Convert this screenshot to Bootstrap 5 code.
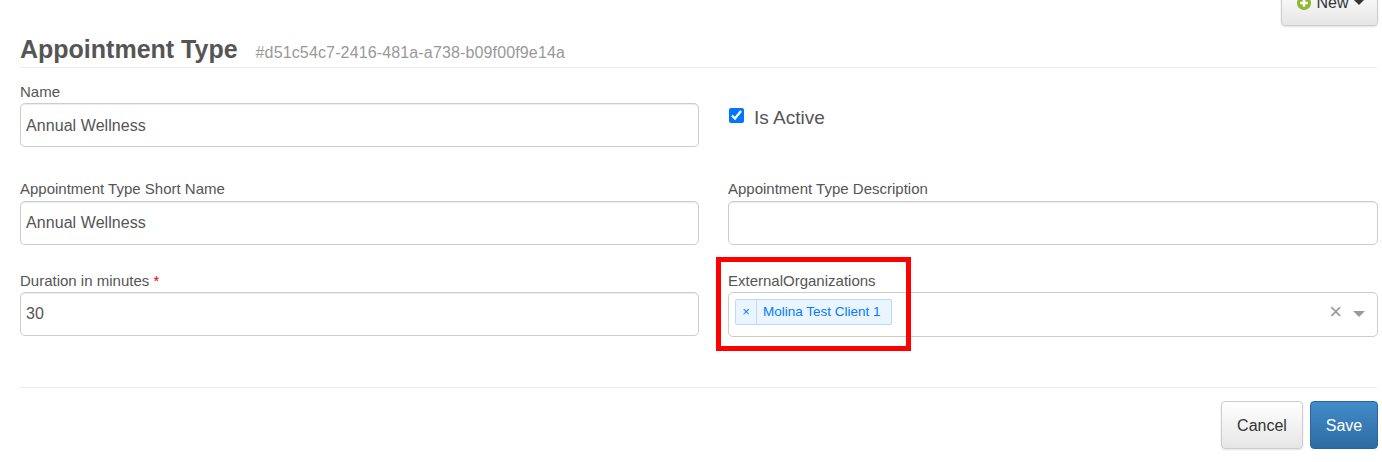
<!DOCTYPE html>
<html lang="en">
<head>
<meta charset="utf-8">
<title>Appointment Type</title>
<link href="https://cdn.jsdelivr.net/npm/bootstrap@5.3.0/dist/css/bootstrap.min.css" rel="stylesheet">
<style>
html, body { height: 462px; overflow: hidden; background: #fff; }
body { font-family: "Liberation Sans", Arial, sans-serif; color: #555; font-size: 14px; }
.page-wrap { padding: 0 4px 0 20px; height: 462px; display: flex; flex-direction: column; }
.top-bar { height: 26px; display: flex; justify-content: flex-end; }
.btn-new { width: 97px; height: 41px; margin-top: -15px; font-size: 16px; color: #333; padding: 0 0 6px 2px; background: linear-gradient(#fff, #e6e6e6); border: 1px solid #ccc; border-radius: 4px; box-shadow: 0 1px 2px rgba(0,0,0,.12); display: flex; align-items: center; justify-content: center; gap: 5px; }
.plus-ico { width: 14px; height: 14px; flex: none; }
.caret-ico { width: 0; height: 0; border-left: 5px solid transparent; border-right: 5px solid transparent; border-top: 5px solid #333; }
.title-row { height: 42px; border-bottom: 1px solid #eee; display: flex; align-items: baseline; padding-top: 9px; gap: 18px; }
.title-main { font-size: 25px; font-weight: 700; color: #555; margin: 0; line-height: 28px; }
.title-id { font-size: 16px; letter-spacing: .14px; color: #999; }
.form-cols { display: grid; grid-template-columns: 679px 650px; column-gap: 29px; margin-top: 15px; }
.fld-label { display: block; font-size: 15px; line-height: 17px; color: #555; margin: 0 0 3px; }
.lbl-gap { margin-bottom: 4px; }
.fld-input { height: 44px; font-size: 16px; letter-spacing: .07px; color: #555; padding: 8px 5px 6px; border: 1px solid #ccc; border-radius: 5px; box-shadow: inset 0 1px 1px rgba(0,0,0,.075); }
.fld-input.fld-low { padding: 6px 5px; }
.cell-a { height: 97px; }
.cell-b { height: 92px; }
.check-cell { padding-top: 22px; display: flex; align-items: flex-start; gap: 10px; font-size: 19px; line-height: 26px; padding-left: 1px; }
.check-cell .form-check-input { appearance: auto; -webkit-appearance: auto; width: 15px; height: 15px; margin: 3px 0 0; accent-color: #0075ff; background-image: none; }
.req-mark { color: #e00; }
.tag-box { height: 45px; border: 1px solid #ccc; border-radius: 5px; display: flex; align-items: center; padding: 0 12px 0 6px; }
.tag-chip { display: flex; align-items: stretch; height: 26px; margin-top: -5px; background: #ebf5ff; border: 1px solid #b8dbff; border-radius: 2px; color: #007eff; font-size: 14px; line-height: 23px; }
.tag-x { width: 21px; text-align: center; border-right: 1px solid #b8dbff; font-size: 13px; }
.tag-text { padding: 0 10px 0 6px; font-size: 13.5px; }
.box-clear { margin-left: auto; color: #999; font-size: 22px; line-height: 1; margin-top: -5px; }
.box-arrow { margin-left: 11px; margin-top: -1px; width: 0; height: 0; border-left: 6px solid transparent; border-right: 6px solid transparent; border-top: 6px solid #999; }
.foot-rule { border-top: 1px solid #eee; margin-top: 23px; padding-top: 13px; display: flex; justify-content: flex-end; gap: 7px; }
.btn-cancel, .btn-save { height: 48px; font-size: 16px; padding: 2px 0 0; border-radius: 4px; }
.btn-cancel { width: 82px; color: #333; background: linear-gradient(#fff, #e6e6e6); border: 1px solid #ccc; box-shadow: 0 1px 2px rgba(0,0,0,.12); }
.btn-save { width: 68px; color: #fff; background: linear-gradient(#428bca, #2d6ca2); border: 1px solid #2b669a; }
.alert-frame { position: absolute; left: 716px; top: 257px; width: 195px; height: 94px; border: 5px solid #f00; pointer-events: none; }
</style>
</head>
<body>
<div class="page-wrap position-relative">
  <div class="top-bar">
    <button type="button" class="btn btn-new">
      <svg class="plus-ico" viewBox="0 0 14 14"><circle cx="7" cy="7" r="7" fill="#8cb92e"/><path d="M7 3.2v7.6M3.2 7h7.6" stroke="#fff" stroke-width="2.6"/></svg>
      <span>New</span><span class="caret-ico"></span>
    </button>
  </div>
  <div class="title-row">
    <h1 class="title-main">Appointment Type</h1>
    <span class="title-id">#d51c54c7-2416-481a-a738-b09f00f9e14a</span>
  </div>
  <form class="form-cols">
    <div class="cell-a">
      <label class="fld-label">Name</label>
      <input class="form-control fld-input" type="text" value="Annual Wellness">
    </div>
    <div class="cell-a check-cell">
      <input class="form-check-input" type="checkbox" checked id="act">
      <label for="act">Is Active</label>
    </div>
    <div class="cell-b">
      <label class="fld-label lbl-gap">Appointment Type Short Name</label>
      <input class="form-control fld-input fld-low" type="text" value="Annual Wellness">
    </div>
    <div class="cell-b">
      <label class="fld-label lbl-gap">Appointment Type Description</label>
      <input class="form-control fld-input fld-low" type="text">
    </div>
    <div class="cell-b">
      <label class="fld-label">Duration in minutes <span class="req-mark">*</span></label>
      <input class="form-control fld-input fld-low" type="text" value="30">
    </div>
    <div class="cell-b">
      <label class="fld-label">ExternalOrganizations</label>
      <div class="tag-box">
        <div class="tag-chip"><span class="tag-x">×</span><span class="tag-text">Molina Test Client 1</span></div>
        <span class="box-clear">×</span><span class="box-arrow"></span>
      </div>
    </div>
  </form>
  <div class="foot-rule">
    <button type="button" class="btn btn-cancel">Cancel</button>
    <button type="button" class="btn btn-save">Save</button>
  </div>
  <div class="alert-frame"></div>
</div>
<script src="https://cdn.jsdelivr.net/npm/bootstrap@5.3.0/dist/js/bootstrap.bundle.min.js"></script>
</body>
</html>
